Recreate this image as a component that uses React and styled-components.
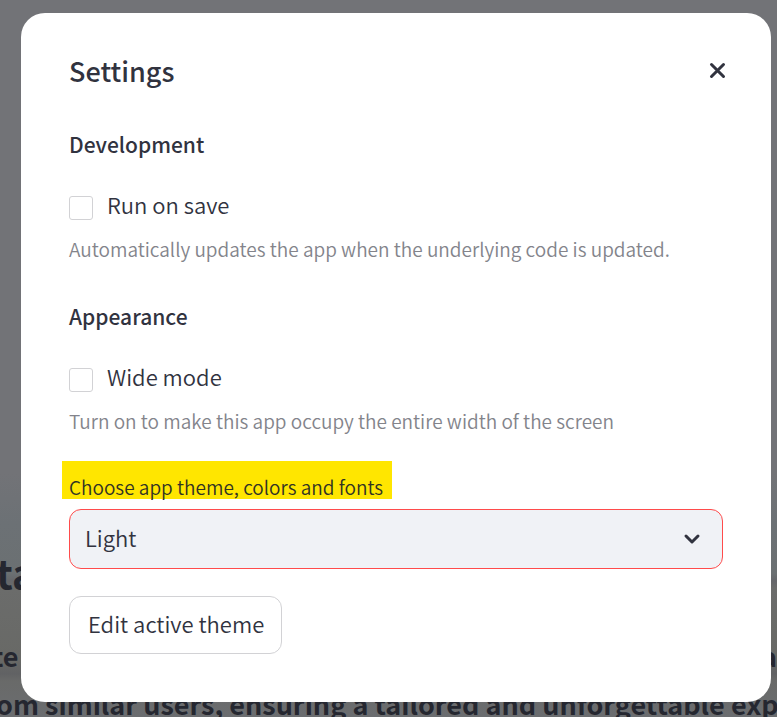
import React from "react";
import styled, { createGlobalStyle } from "styled-components";

const ink = "#31333f";

const GlobalStyle = createGlobalStyle`
  *, *::before, *::after { box-sizing: border-box; }
  body {
    margin: 0;
    overflow: hidden;
    color: ${ink};
    background: #727377;
    font-family: "Source Sans Pro", "Noto Sans CJK SC", "Noto Sans", sans-serif;
    font-weight: 350;
  }
  h1, h2, h3, p { margin: 0; }
  button, input, select { font: inherit; color: inherit; margin: 0; }
`;

const Page = styled.main`
  display: flex;
  flex-direction: column;
  justify-content: flex-end;
  height: 100vh;
  overflow: hidden;
  color: #252730;
  background: linear-gradient(
    to bottom,
    #727377 0%, #727377 66%, #6c7175 73%, #6b7072 80%,
    #65666a 81%, #6b6c6b 82%, #686966 92%,
    #616264 94%, #696a69 95%, #6b6d70 100%
  );
  white-space: nowrap;
`;

const PageTitle = styled.h1`
  font-size: 40px;
  line-height: 48px;
  font-weight: 700;
  margin: 0 0 36px -4px;
`;

const PageLine = styled.p`
  display: flex;
  justify-content: space-between;
  font-size: 27px;
  line-height: 48px;
  font-weight: 700;
  margin-left: -8px;
  &:last-child { margin: 0 0 -11px -4px; }
`;

const Overlay = styled.div`
  position: fixed;
  inset: 0;
  padding: 13px 6px 0 21px;
`;

const Dialog = styled.section`
  padding: 40px 48px 48px;
  border-radius: 24px;
  background: #fff;
`;

const DialogHeader = styled.header`
  display: flex;
  align-items: center;
  justify-content: space-between;
  height: 36px;
  margin-bottom: 39px;
`;

const DialogTitle = styled.h2`
  font-size: 27px;
  line-height: 36px;
  font-weight: 500;
`;

const CloseButton = styled.button`
  display: flex;
  padding: 0;
  margin-right: -7px;
  border: 0;
  background: none;
  cursor: pointer;
`;

const Group = styled.section`
  margin-bottom: 37px;
  & + & { margin-bottom: 26px; }
`;

const GroupTitle = styled.h3`
  font-size: 21px;
  line-height: 32px;
  font-weight: 500;
  margin-bottom: 36px;
`;

const CheckRow = styled.label`
  display: flex;
  align-items: center;
  gap: 14px;
  font-size: 22px;
  line-height: 24px;
  cursor: pointer;
`;

const CheckText = styled.span`
  margin: -4px 0 4px;
`;

const CheckBox = styled.input`
  appearance: none;
  width: 24px;
  height: 24px;
  border: 1px solid #d2d2d5;
  border-radius: 3px;
  background: #fff;
  &:checked { background: #ff4b4b; border-color: #ff4b4b; }
`;

const Caption = styled.p`
  margin-top: 15px;
  font-size: 19px;
  line-height: 28px;
  color: #83848b;
`;

const ThemeLabel = styled.label`
  display: block;
  width: fit-content;
  margin: 0 0 10px -7px;
  padding: 14px 9px 0 7px;
  font-size: 19px;
  line-height: 24px;
  color: #313324;
  background: #ffe600;
`;

const SelectFrame = styled.div`
  display: grid;
  align-items: center;
  margin-bottom: 27px;
  & > * { grid-area: 1 / 1; }
  & > svg { justify-self: end; margin-right: 19px; pointer-events: none; }
`;

const Select = styled.select`
  appearance: none;
  width: 100%;
  height: 60px;
  padding: 0 48px 4px 15px;
  border: 1px solid #ff4b4b;
  border-radius: 12px;
  outline: none;
  background: #f0f2f6;
  font-size: 22px;
`;

const EditButton = styled.button`
  display: block;
  padding: 0 17px 4px 18px;
  border: 1px solid #d2d2d5;
  border-radius: 12px;
  background: #fff;
  font-size: 22px;
  line-height: 52px;
  cursor: pointer;
`;

const Icon = styled.svg`
  display: block;
  fill: none;
  stroke: ${ink};
  stroke-width: 3;
  stroke-linecap: round;
  stroke-linejoin: round;
`;

function Setting({ title, label, caption }) {
  return (
    <Group>
      <GroupTitle>{title}</GroupTitle>
      <CheckRow>
        <CheckBox type="checkbox" />
        <CheckText>{label}</CheckText>
      </CheckRow>
      <Caption>{caption}</Caption>
    </Group>
  );
}

export default function App() {
  return (
    <>
      <GlobalStyle />
      <Page>
        <PageTitle>ta</PageTitle>
        <PageLine><span>te</span><span>a</span></PageLine>
        <PageLine>om similar users, ensuring a tailored and unforgettable exp</PageLine>
      </Page>
      <Overlay>
        <Dialog role="dialog" aria-labelledby="settings-title">
          <DialogHeader>
            <DialogTitle id="settings-title">Settings</DialogTitle>
            <CloseButton aria-label="Close">
              <Icon width="24" height="24" viewBox="0 0 24 24">
                <path d="M5.5 5.5L17.5 17.5M17.5 5.5L5.5 17.5" />
              </Icon>
            </CloseButton>
          </DialogHeader>
          <Setting
            title="Development"
            label="Run on save"
            caption="Automatically updates the app when the underlying code is updated."
          />
          <Setting
            title="Appearance"
            label="Wide mode"
            caption="Turn on to make this app occupy the entire width of the screen"
          />
          <ThemeLabel htmlFor="theme">Choose app theme, colors and fonts</ThemeLabel>
          <SelectFrame>
            <Select id="theme" defaultValue="Light">
              <option>Light</option>
              <option>Dark</option>
            </Select>
            <Icon width="24" height="24" viewBox="0 0 24 24">
              <path d="M6 9L12 15L18 9" />
            </Icon>
          </SelectFrame>
          <EditButton>Edit active theme</EditButton>
        </Dialog>
      </Overlay>
    </>
  );
}
